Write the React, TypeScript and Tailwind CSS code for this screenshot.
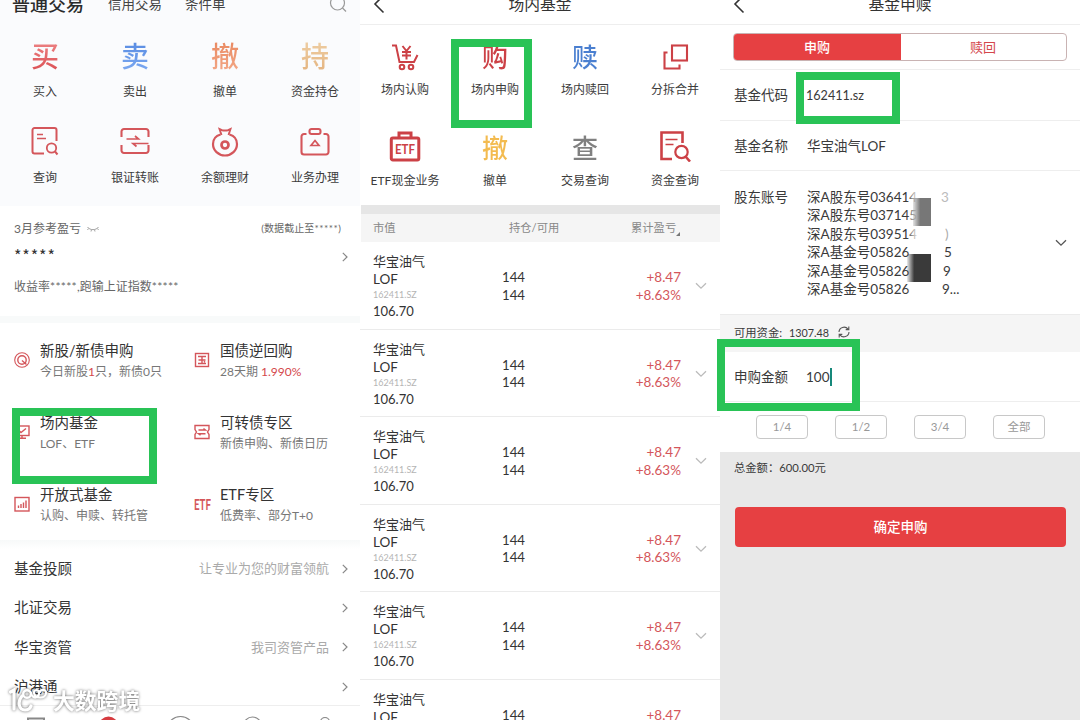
import React from "react";

type IconProps = { className?: string };

const Chevron = ({ className = "" }: IconProps) => (
  <svg viewBox="0 0 6 10" className={`w-[6px] h-[10px] ${className}`} fill="none" stroke="currentColor" strokeWidth="1.2">
    <path d="M0.8 0.8 5 5 0.8 9.2" />
  </svg>
);

const ChevronDown = ({ className = "" }: IconProps) => (
  <svg viewBox="0 0 12 8" className={className} fill="none" stroke="currentColor" strokeWidth="1.3">
    <path d="M1 1.2 6 6.2 11 1.2" />
  </svg>
);

const BackArrow = () => (
  <svg viewBox="0 0 12 20" className="w-3 h-5 text-[#333]" fill="none" stroke="currentColor" strokeWidth="1.6">
    <path d="M10.5 1.5 2 10l8.5 8.5" />
  </svg>
);

const QueryIcon = () => (
  <svg viewBox="0 0 30 30" className="-mt-[3px] w-[30px] h-[30px]" fill="none" stroke="#d4565b" strokeWidth="2">
    <path d="M14 27.5H4.5A2 2 0 0 1 2.5 25.5V4A2 2 0 0 1 4.5 2H24.5A2 2 0 0 1 26.5 4V15" />
    <path d="M7 8.5h6M7 12.5h9" strokeWidth="1.7" />
    <circle cx="21.5" cy="22" r="4.7" strokeWidth="1.8" />
    <path d="m25 25.5 2.5 3" />
  </svg>
);

const TransferIcon = () => (
  <svg viewBox="0 0 30 28" className="-mt-[2px] w-[30px] h-[28px]" fill="none" stroke="#d4565b" strokeWidth="2.1">
    <path d="M1.5 10V4.5A2.5 2.5 0 0 1 4 2H26A2.5 2.5 0 0 1 28.5 4.5V10M1.5 18v5.5A2.5 2.5 0 0 0 4 26H26a2.5 2.5 0 0 0 2.5-2.5V18" />
    <path d="M6.5 12H18.5l-3.5-3M28.5 16.5H13l3.5 3" strokeWidth="1.7" />
  </svg>
);

const PurseIcon = () => (
  <svg viewBox="0 0 28 30" className="w-[28px] h-[30px]" fill="none" stroke="#d4565b" strokeWidth="2.2">
    <path d="M9.5 7.5C4.5 9 2 12.5 2 17a12 11.5 0 0 0 24 0c0-4.5-2.5-8-7.5-9.5" />
    <path d="M10.5 8 8.5 2l3.5 1.5h4L19.5 2l-2 6" strokeWidth="1.9" />
    <circle cx="14" cy="18" r="3.5" strokeWidth="2.7" />
  </svg>
);

const BusinessIcon = () => (
  <svg viewBox="0 0 30 30" className="w-[30px] h-[30px]" fill="none" stroke="#d4565b" strokeWidth="2.1">
    <path d="M6.5 7H4a2.500 2.500 0 0 0-2.500 2.500V25A2.500 2.500 0 0 0 4 27.500H26a2.500 2.500 0 0 0 2.500-2.500V9.500A2.500 2.500 0 0 0 26 7H23.500" />
    <rect x="9.5" y="2" width="11" height="5" rx="2" />
    <path d="M15 13.5 19 18.500H11Z" strokeWidth="1.7" />
  </svg>
);

const CartIcon = () => (
  <svg viewBox="0 0 28 28" className="w-[28px] h-[28px]" fill="none" stroke="#cc4146" strokeWidth="2">
    <path d="M1 2.5H5L8.5 19H23l3.5-7" />
    <circle cx="11" cy="24" r="2.3" />
    <circle cx="20" cy="24" r="2.3" />
    <path d="m11.5 3 4 5 4-5M15.5 8v8.500M11 9h9M11 12.500h9" />
  </svg>
);

const SplitIcon = () => (
  <svg viewBox="0 0 28 28" className="w-[28px] h-[28px]" fill="none" stroke="#cc4146" strokeWidth="2.1">
    <rect x="11" y="2.5" width="15" height="15" />
    <path d="M6.5 9.5H3.5V25.500H18.500V21.500" />
  </svg>
);

const EtfCaseIcon = () => (
  <svg viewBox="0 0 32 32" className="-mt-[3px] w-[32px] h-[32px]" fill="none" stroke="#cc4146" strokeWidth="3">
    <rect x="2.3" y="8" width="27.5" height="22" rx="1.5" />
    <path d="M10 8V3H22V8" />
    <text x="16" y="24" textAnchor="middle" fontSize="13" fontWeight="700" textLength="20" lengthAdjust="spacingAndGlyphs" fill="#cc4146" stroke="none">
      ETF
    </text>
  </svg>
);

const FundQueryIcon = () => (
  <svg viewBox="0 0 32 32" className="-mt-[3px] w-[32px] h-[32px]" fill="none" stroke="#cc4146" strokeWidth="2.6">
    <path d="M13 29H2.5V2.5H23.5V13" />
    <path d="M6.5 9.5h12M6.5 14.5h8" strokeWidth="1.4" />
    <circle cx="22.5" cy="22" r="6.2" strokeWidth="2.2" />
    <path d="m26.5 26.500 4.500 5" />
  </svg>
);

const SmallIcon = ({ kind }: { kind: string }) => {
  if (kind === "etf") {
    return (
      <svg viewBox="0 0 17 16" className="w-[17px] h-4">
        <text x="0" y="13.5" fontSize="16" fontWeight="700" textLength="17" lengthAdjust="spacingAndGlyphs" fill="#d4565b">
          ETF
        </text>
      </svg>
    );
  }
  return (
    <svg viewBox="0 0 16 16" className="w-4 h-4" fill="none" stroke="#d4565b" strokeWidth="1.4">
      {kind === "new" && (
        <>
          <circle cx="8" cy="8" r="7.3" strokeWidth="1.1" />
          <circle cx="8" cy="8" r="4.2" />
          <path d="m8 8.5 4.5 4" />
        </>
      )}
      {kind === "bond" && (
        <>
          <rect x="1.5" y="1.5" width="13" height="13" />
          <path d="M4 4.5h8M4.5 8h7M4 11.5h8M8 4.5v7M10 9.3l1 1" />
        </>
      )}
      {kind === "screen" && (
        <>
          <rect x="1" y="2" width="14" height="9.5" />
          <path d="m4.5 6 2.5 2.5 5-4M8 11.500V14M4 14.300h8" />
        </>
      )}
      {kind === "ticket" && (
        <>
          <path d="M1 1.5h14v4l-1.500 2.500L15 10.500v4H1v-4L2.500 8 1 5.500Z" />
          <path d="M4.5 6h7l-2-1.500M11.500 9.700h-7l2 1.500" />
        </>
      )}
      {kind === "chart" && (
        <>
          <rect x="1" y="1.5" width="14" height="13.5" />
          <path d="M4.5 12V9.5M7 12V8M9.5 12V6.5M12 12V4.5" />
        </>
      )}
    </svg>
  );
};

type Entry = { label: string; icon: React.ReactNode };

const tradeEntries: Entry[] = [
  { label: "买入", icon: <Glyph text="买" color="bg-linear-to-b from-[#ee8789] to-[#d94a50]" /> },
  { label: "卖出", icon: <Glyph text="卖" color="bg-linear-to-b from-[#5488e0] to-[#7fabf2]" /> },
  { label: "撤单", icon: <Glyph text="撤" color="bg-linear-to-b from-[#e8855c] to-[#f3aa8a]" /> },
  { label: "资金持仓", icon: <Glyph text="持" color="bg-linear-to-b from-[#efd0a6] to-[#e3b27e]" /> },
  { label: "查询", icon: <QueryIcon /> },
  { label: "银证转账", icon: <TransferIcon /> },
  { label: "余额理财", icon: <PurseIcon /> },
  { label: "业务办理", icon: <BusinessIcon /> },
];

const fundEntries: Entry[] = [
  { label: "场内认购", icon: <CartIcon /> },
  { label: "场内申购", icon: <Glyph small text="购" color="bg-[#cc4146]" /> },
  { label: "场内赎回", icon: <Glyph small text="赎" color="bg-[#4a7fd0]" /> },
  { label: "分拆合并", icon: <SplitIcon /> },
  { label: "ETF现金业务", icon: <EtfCaseIcon /> },
  { label: "撤单", icon: <Glyph small text="撤" color="bg-[#f3bb50]" /> },
  { label: "交易查询", icon: <Glyph small text="查" color="bg-[#808080]" /> },
  { label: "资金查询", icon: <FundQueryIcon /> },
];

const services = [
  { kind: "new", title: "新股/新债申购", sub: <>今日新股<b className="font-normal text-[#d4464b]">1</b>只，新债0只</> },
  { kind: "bond", title: "国债逆回购", sub: <>28天期 <b className="font-normal text-[#d4464b]">1.990%</b></> },
  { kind: "screen", title: "场内基金", sub: "LOF、ETF" },
  { kind: "ticket", title: "可转债专区", sub: "新债申购、新债日历" },
  { kind: "chart", title: "开放式基金", sub: "认购、申赎、转托管" },
  { kind: "etf", title: "ETF专区", sub: "低费率、部分T+0" },
];

const links = [
  { title: "基金投顾", note: "让专业为您的财富领航" },
  { title: "北证交易", note: "" },
  { title: "华宝资管", note: "我司资管产品" },
  { title: "沪港通", note: "" },
];

const accounts = [
  { head: "深A股东号036414", tail: "3", tone: "text-[#bbb]" },
  { head: "深A股东号037145", tail: "", tone: "" },
  { head: "深A股东号039514", tail: ")", tone: "text-[#aaa] pl-1" },
  { head: "深A基金号05826", tail: "5", tone: "pl-[3px]" },
  { head: "深A基金号05826", tail: "9", tone: "pl-0.5" },
  { head: "深A基金号05826", tail: "9...", tone: "pl-px" },
];

function Glyph({ text, color, small }: { text: string; color: string; small?: boolean }) {
  return (
    <span className={`${small ? "text-[26px]" : "text-[28px]"} leading-[36px] font-medium bg-clip-text text-transparent ${color}`}>
      {text}
    </span>
  );
}

const TradePanel = () => (
  <section className="w-[360px] h-[720px] flex flex-col overflow-hidden bg-white">
    <div className="h-[206px] shrink-0 bg-[#fafbfd]">
      <div className="-mt-[11px] h-[30px] flex items-center pl-3 pr-[13px] text-[#444]">
        <span className="text-[18px] font-medium text-[#2b2b2b]">普通交易</span>
        <span className="ml-6 pt-px text-[13.5px]">信用交易</span>
        <span className="ml-[23px] pt-px text-[13.5px]">条件单</span>
        <svg viewBox="0 0 18 18" className="ml-auto w-[18px] h-[18px]" fill="none" stroke="#999" strokeWidth="1.2">
          <circle cx="8.5" cy="8" r="7" />
          <path d="m13.5 13 3.5 3.5" />
        </svg>
      </div>
      <div className="mt-[15px] grid grid-cols-4 gap-y-4">
        {tradeEntries.map((item) => (
          <div key={item.label} className="flex flex-col items-center">
            <div className="h-11 flex items-center">{item.icon}</div>
            <span className="h-[26px] text-xs leading-[28px] text-[#3c3c3c]">{item.label}</span>
          </div>
        ))}
      </div>
    </div>

    <div className="h-[110px] shrink-0 px-[14px] pt-[14px] text-xs text-[#666]">
      <div className="h-[18px] flex items-center">
        <span>3月参考盈亏</span>
        <svg viewBox="0 0 12 6" className="ml-1.5 w-3 h-1.5" fill="none" stroke="#999" strokeWidth="0.9">
          <path d="M0.5 1C3 4.5 9 4.5 11.5 1M1.5 2.5 0.5 4M4.5 3.7 4 5.5M7.5 3.7 8 5.5M10.5 2.5l1 1.5" />
        </svg>
        <span className="ml-auto mr-[5px] text-[10px] tracking-[0.1px]">(数据截止至<span className="tracking-[0.5px]">*****</span>)</span>
      </div>
      <div className="h-[30px] flex items-center justify-between text-[#666]">
        <span className="pt-[3px] font-['Noto_Sans_CJK_SC'] text-[16px] leading-none tracking-[0.9px] text-[#333]">*****</span>
        <Chevron className="mt-2 -mr-[2px] text-[#888]" />
      </div>
      <div className="mt-2.5 h-[18px] leading-[18px]">
        收益率<span className="tracking-[0.3px]">*****</span>,跑输上证指数<span className="tracking-[0.3px]">*****</span>
      </div>
    </div>

    <div className="h-[7px] shrink-0 bg-[#f8fafa]" />
    <div className="h-[217px] shrink-0 pl-[14px] pt-[17px] grid grid-cols-[180px_166px] auto-rows-[72px]">
      {services.map((item) => (
        <div key={item.title} className="flex">
          <div className="w-[26px] pt-3">
            <SmallIcon kind={item.kind} />
          </div>
          <div className="flex flex-col whitespace-nowrap">
            <span className="h-[21px] text-[14.5px] leading-[21px] text-[#333]">{item.title}</span>
            <span className="h-5 text-xs leading-[21px] text-[#777]">{item.sub}</span>
          </div>
        </div>
      ))}
    </div>

    <div className="h-[9px] shrink-0 bg-linear-to-b from-[#f7f9f9] to-white" />
    <div className="h-[157px] shrink-0 border-b border-[#eee]">
      {links.map((item) => (
        <div key={item.title} className="h-[39.4px] flex items-center pl-[14px] pr-3">
          <span className="text-[14.5px] text-[#333]">{item.title}</span>
          <span className="ml-auto mr-[13px] text-[13px] text-[#aaa]">{item.note}</span>
          <Chevron className="text-[#888]" />
        </div>
      ))}
    </div>
    {/* upper edge of the tab bar */}
    <svg viewBox="0 0 360 14" className="w-[360px] h-[14px] shrink-0" fill="none" stroke="#888" strokeWidth="1.2">
      <path d="M28 14V12.500H44V14" strokeWidth="2" />
      <circle cx="108.5" cy="20" r="9.5" fill="#d63b40" stroke="none" />
      <circle cx="180.5" cy="24" r="13.5" />
      <circle cx="252.5" cy="20" r="9" />
      <circle cx="325" cy="16" r="4.5" />
    </svg>
  </section>
);

const FundPanel = () => (
  <section className="w-[360px] h-[720px] flex flex-col overflow-hidden bg-white">
    <div className="-mt-[16px] h-[41px] shrink-0 grid grid-cols-3 items-center border-b border-[#eee] px-[13px]">
      <BackArrow />
      <span className="text-center text-[15.8px] text-[#333]">场内基金</span>
    </div>
    <div className="h-[180px] shrink-0 pt-[10px] grid grid-cols-4 auto-rows-[90.5px]">
      {fundEntries.map((item) => (
        <div key={item.label} className="flex flex-col items-center">
          <div className="h-11 flex items-center">{item.icon}</div>
          <span className="h-[22px] text-xs leading-[22px] text-[#3c3c3c] whitespace-nowrap">{item.label}</span>
        </div>
      ))}
    </div>
    <div className="h-[9px] shrink-0 ml-px bg-[#e6e6e6]" />
    <div className="h-7 shrink-0 ml-px flex items-center bg-[#f5f5f5] text-[11.3px] text-[#888]">
      <span className="w-[136px] pl-3">市值</span>
      <span className="pl-[12px] w-[134px]">持仓/可用</span>
      <span>累计盈亏</span>
      <i className="mt-3 border-b-4 border-l-4 border-b-[#777] border-l-transparent" />
    </div>
    {[0, 1, 2, 3, 4, 5].map((row) => (
      <div key={row} className="h-[87.6px] shrink-0 flex items-start border-b border-[#ebebeb] text-[#333]">
        <div className="w-[142px] pl-[13px] pt-[10px] flex flex-col">
          <span className="text-[13px] leading-[18px]">华宝油气</span>
          <span className="text-[13.5px] leading-[18px]">LOF</span>
          <span className="text-[9px] leading-[13px] text-[#b5b5b5]">162411.SZ</span>
          <span className="text-[13px] leading-5">106.70</span>
        </div>
        <div className="w-[60px] pt-[27px] flex flex-col text-[13.2px] leading-[17.5px]">
          <span>144</span>
          <span>144</span>
        </div>
        <div className="w-[119px] pt-[27px] flex flex-col items-end text-[13.5px] leading-[17.5px] text-[#d4565b]">
          <span>+8.47</span>
          <span>+8.63%</span>
        </div>
        <ChevronDown className="mt-10 ml-[14px] w-3 h-2 text-[#bbb]" />
      </div>
    ))}
  </section>
);

const OrderPanel = () => (
  <section className="w-[360px] h-[720px] flex flex-col overflow-hidden bg-[#e8e8e8] text-[13.5px] text-[#3a3a3a]">
    <div className="-mt-[16px] h-[41px] shrink-0 grid grid-cols-3 items-center border-b border-[#eee] bg-white px-[13px]">
      <BackArrow />
      <span className="text-center text-[15.8px] text-[#333]">基金申赎</span>
    </div>
    <div className="h-[45px] shrink-0 bg-white border-b border-[#eee] px-[13px] pt-2">
      <div className="h-7 flex rounded-[4px] overflow-hidden border border-[#c9b3b3] text-[13px] leading-[26px] text-center">
        <button className="w-[168px] -m-px bg-[#e64042] text-white font-medium">申购</button>
        <button className="grow text-[#d4464b]">赎回</button>
      </div>
    </div>
    <div className="h-[51px] shrink-0 flex items-center bg-white border-b border-[#eee] pl-[14px] pt-px">
      <span className="w-[72px]">基金代码</span>
      <span className="pt-px text-[12.6px]">162411.sz</span>
    </div>
    <div className="h-[50px] shrink-0 flex items-center bg-white border-b border-[#eee] pl-[14px] pt-0.5">
      <span className="w-[73px]">基金名称</span>
      <span>华宝油气LOF</span>
    </div>
    <div className="relative h-[143px] shrink-0 flex bg-white pl-[14px] pt-[17px] leading-[18.4px]">
      <span className="w-[73px]">股东账号</span>
      <div className="w-[154px]">
        {accounts.map((item, i) => (
          <div key={i} className="flex h-[18.4px]">
            <span className="w-[134px] whitespace-nowrap">{item.head}</span>
            <span className={item.tone}>{item.tail}</span>
          </div>
        ))}
      </div>
      <ChevronDown className="ml-auto mr-[13px] mt-[51px] w-3 h-2 text-[#555]" />
      {/* blocks that hide part of the account numbers */}
      <div className="absolute left-[187px] top-[14px] w-[28px] h-[118px] bg-linear-to-r from-white/0 to-white to-40%" />
      <div className="absolute left-[193px] top-[27px] w-[18px] h-7 bg-linear-to-r from-[#777]/20 to-[#777] to-40%" />
      <div className="absolute left-[187px] top-[83px] w-6 h-7 bg-linear-to-r from-[#3a3a3a]/10 to-[#3a3a3a] to-30%" />
    </div>
    <div className="h-[38px] shrink-0 flex items-center bg-[#f5f5f5] border-t border-[#ebebeb] pl-[14px] text-[11.3px]">
      <span className="w-[55px]">可用资金:</span>
      <span className="text-[10.8px]">1307.48</span>
      <svg viewBox="0 0 12 12" className="ml-[9px] -mt-[3px] w-3 h-3" fill="none" stroke="#555" strokeWidth="1.1">
        <path d="M1 6A5 5 0 0 1 10 3.2M11 6a5 5 0 0 1-9 2.8M10.8 0.5V3.6H7.7M1.2 11.5V8.4H4.3" />
      </svg>
    </div>
    <div className="h-[50px] shrink-0 flex items-center bg-white border-b border-[#eee] pl-[14px] pt-px">
      <span className="w-[72px]">申购金额</span>
      <span className="text-[13.5px]">100</span>
      <i className="w-0.5 h-[18px] bg-[#16887a]" />
    </div>
    <div className="h-[50px] shrink-0 flex items-center justify-between bg-white pl-9 pr-[35px] text-[11.5px] text-[#999]">
      {["1/4", "1/2", "3/4", "全部"].map((part) => (
        <button key={part} className="w-[52px] h-6 rounded-[4px] border border-[#c8c8c8] leading-none">
          {part}
        </button>
      ))}
    </div>
    <div className="h-[30px] shrink-0 flex items-center pl-[14px] pt-0.5 text-[11.3px]">总金额：600.00元</div>
    <button className="mt-[25px] ml-[15px] w-[331px] h-10 shrink-0 rounded-[4px] bg-[#e64042] font-medium text-white">
      确定申购
    </button>
  </section>
);

const Watermark = () => (
  <div className="absolute left-[9px] top-[687px] flex items-center text-white drop-shadow-[0_0_1.5px_rgba(0,0,0,0.6)]">
    <svg viewBox="0 0 42 28" className="w-[42px] h-7" fill="none" stroke="currentColor" strokeWidth="3.2" strokeLinecap="round">
      <path d="M1.5 5 5 3V22M13 9c-5 6-3 14 3 14 3 0 5-1 6-4" />
      <circle cx="18" cy="7" r="3.8" strokeWidth="2.4" />
      <path d="M22 6c2 7 8 5 8 0 0-4-5-4-5 0 1 6 12 6 12 0 0-4-5-4-6-1" strokeWidth="2.2" />
    </svg>
    <span className="ml-0.5 text-[21.8px] leading-7 font-bold">大数跨境</span>
  </div>
);

const App = () => {
  return (
    <main className="relative flex w-[1080px] h-[720px] overflow-hidden font-['Lato','Noto_Sans_CJK_SC',sans-serif]">
      <TradePanel />
      <FundPanel />
      <OrderPanel />
      <Watermark />
      <div className="absolute left-[12px] top-[408px] w-[145px] h-[76px] border-8 border-[#29c356]" />
      <div className="absolute left-[451px] top-[39px] w-[81px] h-[89px] border-8 border-[#29c356]" />
      <div className="absolute left-[796px] top-[72px] w-[104px] h-[52px] border-8 border-[#29c356]" />
      <div className="absolute left-[717px] top-[339px] w-[143px] h-[72px] border-8 border-[#29c356]" />
    </main>
  );
};

export default App;
